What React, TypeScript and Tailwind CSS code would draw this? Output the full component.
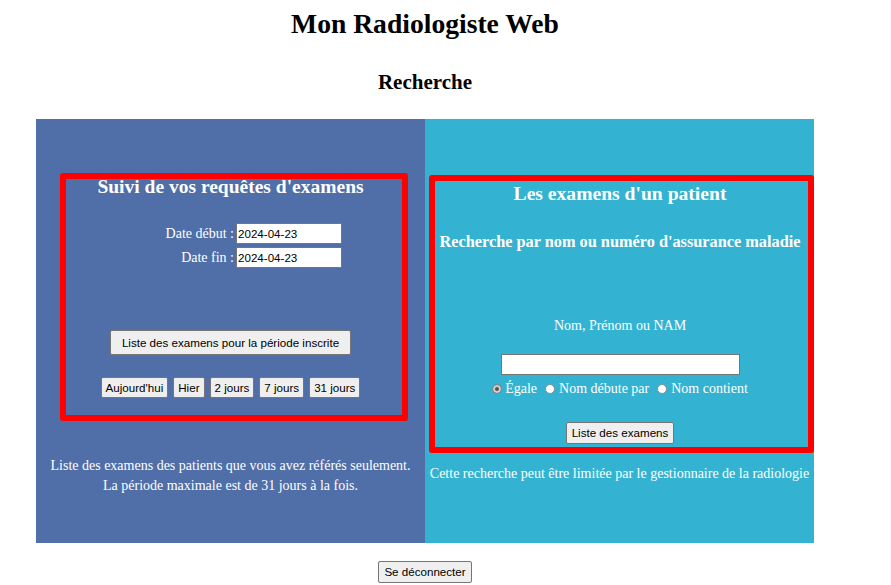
import React from "react";

const btn =
	"flex items-center justify-center border border-[#767676] rounded-[2px] bg-[#efefef] text-black font-['Liberation_Sans',Arial,sans-serif] text-[11.6px] leading-none";

const DateRow = ({ label }: { label: string }) => (
	<div className="flex items-center h-[21px]">
		<span className="w-[168px] text-right text-[14px] leading-[20px] text-white">{label}</span>
		<input
			type="text"
			defaultValue="2024-04-23"
			className="ml-[2px] w-[106px] h-[21px] pl-[1px] bg-white border border-[#767676] text-black font-['Liberation_Sans',Arial,sans-serif] text-[11.6px] outline-none"
		/>
	</div>
);

const Radio = ({ label, checked }: { label: string; checked?: boolean }) => (
	<label className="flex items-center">
		<input
			type="radio"
			name="mode"
			defaultChecked={checked}
			className="appearance-none w-[10px] h-[10px] rounded-full border border-[#8a8a8a] bg-white checked:bg-[#555] checked:shadow-[inset_0_0_0_2px_#cfcfcf]"
		/>
		<span className={checked ? "ml-[3px]" : "ml-[4px]"}>{label}</span>
	</label>
);

export default function App() {
	return (
		<div className="w-[850px] flex flex-col items-center bg-white text-black font-['Liberation_Serif','Times_New_Roman',serif]">
			<h1 className="mt-[8px] h-[32px] leading-[32px] text-[27.6px] font-bold">Mon Radiologiste Web</h1>
			<h2 className="mt-[30px] h-[24px] leading-[24px] text-[21px] font-bold">Recherche</h2>

			<div className="mt-[25px] flex h-[424px] text-white">
				{/* suivi des requêtes */}
				<div className="w-[389px] flex flex-col bg-[#506ea8] pt-[54px]">
					<div className="ml-[24px] w-[348px] flex flex-col items-center border-[6px] border-[#ff0000] rounded-[3px] pr-[7px] pb-[17px]">
						<h3 className="-mt-[3px] h-[22px] leading-[22px] text-[19.5px] font-bold">
							Suivi de vos requêtes d'examens
						</h3>
						<div className="mt-[25px] self-stretch flex flex-col gap-[3px]">
							<DateRow label="Date début :" />
							<DateRow label="Date fin :" />
						</div>
						<button className={`${btn} mt-[62px] h-[25px] px-[11px]`}>
							Liste des examens pour la période inscrite
						</button>
						<div className="mt-[22px] flex gap-[5px]">
							{["Aujourd'hui", "Hier", "2 jours", "7 jours", "31 jours"].map((b) => (
								<button key={b} className={`${btn} h-[21px] px-[4px]`}>
									{b}
								</button>
							))}
						</div>
					</div>
					<p className="mt-[35px] text-center text-[14px] leading-[20px]">
						Liste des examens des patients que vous avez référés seulement.
						<br />
						La période maximale est de 31 jours à la fois.
					</p>
				</div>

				{/* examens d'un patient */}
				<div className="w-[389px] flex flex-col bg-[#33b3d1] pt-[56px]">
					<div className="ml-[4px] w-[385px] flex flex-col items-center border-[6px] border-[#ff0000] rounded-[3px] pr-[3px] pb-[3px]">
						<h3 className="mt-[2px] h-[22px] leading-[22px] text-[19.6px] font-bold">Les examens d'un patient</h3>
						<h4 className="mt-[27px] h-[20px] leading-[20px] text-[16.3px] font-bold">
							Recherche par nom ou numéro d'assurance maladie
						</h4>
						<p className="mt-[64px] h-[20px] leading-[20px] text-[14px]">Nom, Prénom ou NAM</p>
						<input
							type="text"
							className="mt-[18px] w-[239px] h-[21px] bg-white border border-[#767676] text-black outline-none"
						/>
						<div className="mt-[4px] h-[20px] flex items-center gap-[8px] text-[14px] leading-[20px]">
							<Radio label="Égale" checked />
							<Radio label="Nom débute par" />
							<Radio label="Nom contient" />
						</div>
						<button className={`${btn} mt-[23px] h-[22px] px-[5px]`}>Liste des examens</button>
					</div>
					<p className="mt-[11px] text-center text-[14px] leading-[20px]">
						Cette recherche peut être limitée par le gestionnaire de la radiologie
					</p>
				</div>
			</div>

			<button className={`${btn} mt-[18px] h-[22px] px-[5px]`}>Se déconnecter</button>
		</div>
	);
}
